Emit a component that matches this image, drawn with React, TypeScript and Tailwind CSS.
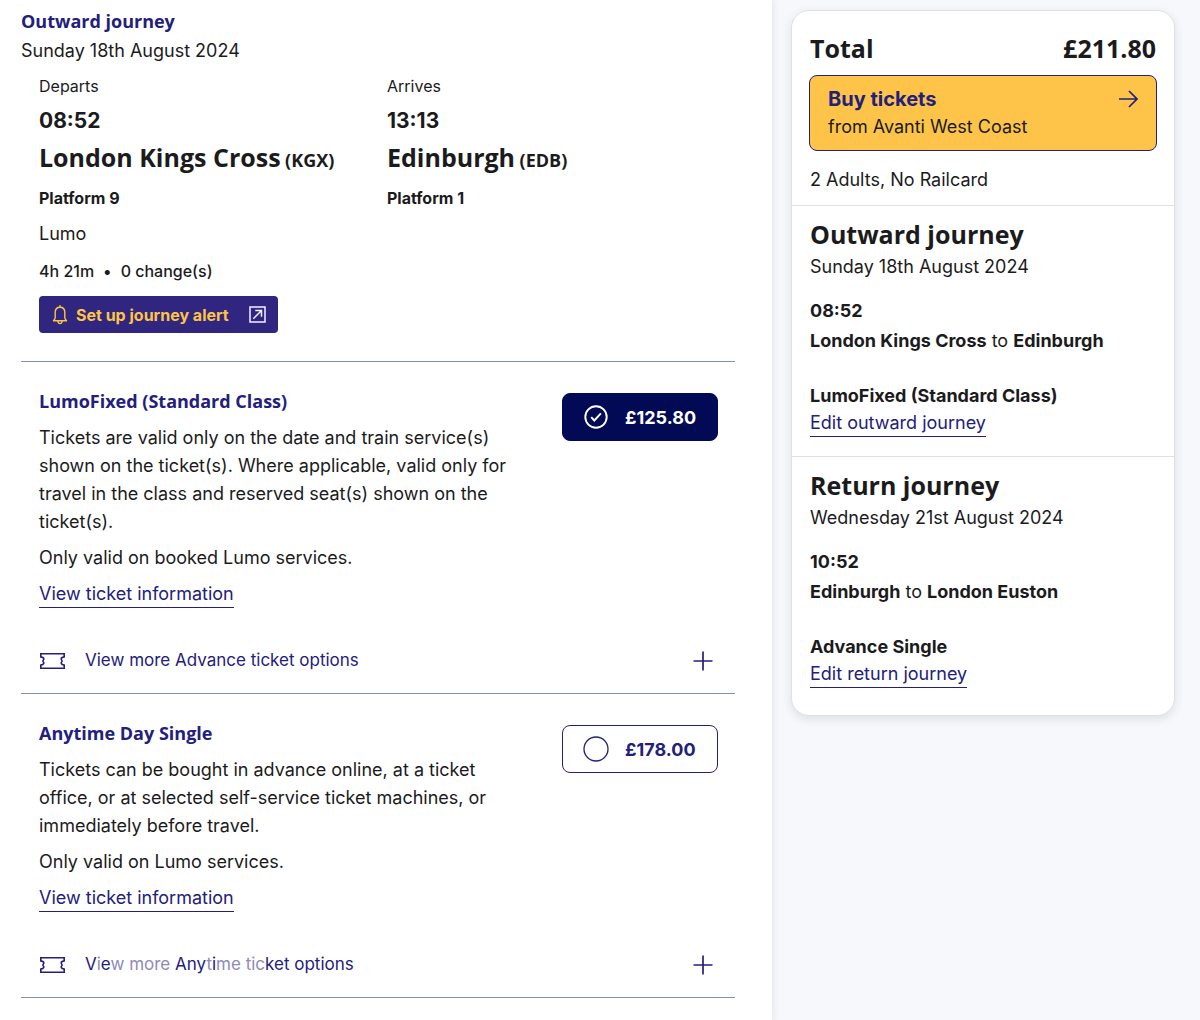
import { useState } from 'react';

const heading = "font-['Open_Sans','Noto_Sans',sans-serif] font-bold";
const link = 'inline-block border-b border-[#22207c] text-[18px] leading-[26px] text-[#22207c]';

type Stop = { label: string; time: string; station: string; code: string; platform: string };

const stops: Stop[] = [
  { label: 'Departs', time: '08:52', station: 'London Kings Cross', code: '(KGX)', platform: 'Platform 9' },
  { label: 'Arrives', time: '13:13', station: 'Edinburgh', code: '(EDB)', platform: 'Platform 1' },
];

function BellIcon() {
  return (
    <svg width="16" height="20" viewBox="0 0 16 20" fill="none" stroke="#fdc447" strokeWidth="1.4" strokeLinejoin="round" aria-hidden="true">
      <path d="M8 2.3c-3 0-4.8 2.2-4.8 5v5.2c0 1.2-.7 2.2-1.7 3.3h13c-1-1.1-1.7-2.1-1.7-3.3V7.3c0-2.8-1.8-5-4.8-5z" />
      <path d="M8 .6v1.7M6 16c.1 1.7.9 2.600 2 2.600s1.900-.9 2-2.600" strokeLinecap="round" />
    </svg>
  );
}

function ExternalIcon() {
  return (
    <svg width="17" height="17" viewBox="0 0 17 17" fill="none" stroke="#f3f1ff" strokeWidth="1.5" aria-hidden="true">
      <path d="M1 1h15v15H1zM4.300 12.700l8-8M6.300 4.500h6.200v6.200" />
    </svg>
  );
}

function TicketIcon() {
  return (
    <svg width="26" height="18" viewBox="0 0 26 18" fill="none" stroke="#22207c" strokeWidth="1.6" strokeLinejoin="miter" aria-hidden="true">
      <path d="M1.800 1.700h23.400v3.200c-1.700.3-3 1-3 2.100 0 .9.900 1.300.9 2s-.9 1.100-.9 2c0 1.100 1.300 1.800 3 2.100v3.200H1.800v-3.200c1.700-.3 3-1 3-2.100 0-.9-.9-1.300-.9-2s.9-1.100.9-2c0-1.100-1.300-1.800-3-2.100z" />
    </svg>
  );
}

function PlusIcon() {
  return (
    <svg width="20" height="20" viewBox="0 0 20 20" fill="none" stroke="#22207c" strokeWidth="1.700" aria-hidden="true">
      <path d="M10 .5v19M.5 10h19" />
    </svg>
  );
}

function RadioMark({ checked }: { checked: boolean }) {
  return (
    <svg width="26" height="26" viewBox="0 0 26 26" fill="none" stroke="currentColor" aria-hidden="true">
      {checked ? (
        <>
          <circle cx="13" cy="13" r="10.700" strokeWidth="1.900" />
          <path d="M8.200 13.100l3.100 3.400 6.600-7.100" strokeWidth="1.900" />
        </>
      ) : (
        <circle cx="13" cy="13" r="12" strokeWidth="1.300" />
      )}
    </svg>
  );
}

type FareProps = {
  id: string;
  name: string;
  price: string;
  description: string;
  note: string;
  more: React.ReactNode;
  checked: boolean;
  onSelect: () => void;
};

function Fare({ id, name, price, description, note, more, checked, onSelect }: FareProps) {
  return (
    <section className="border-b border-[#8592a6] pt-[25px]">
      <div className="flex items-start justify-between pl-[18px] pr-[17px]">
        <div className="w-[490px]">
          <h3 className={`${heading} text-[18px] leading-7 text-[#22207c]`}>{name}</h3>
          <p className="mt-[9px] leading-7">{description}</p>
          <p className="mt-2 leading-7">{note}</p>
          <p className="mt-[9px] leading-none">
            <a href="#ticket-information" className={link}>View ticket information</a>
          </p>
        </div>
        <label
          htmlFor={id}
          className={`mt-[6px] flex h-12 w-[156px] cursor-pointer items-center gap-4 rounded-lg border pl-5 text-[18px] font-bold ${
            checked ? 'border-[#020a55] bg-[#020a55] text-white' : 'border-[#22207c] bg-white text-[#22207c]'
          }`}
        >
          <input id={id} type="radio" name="fare" checked={checked} onChange={onSelect} className="sr-only" />
          <RadioMark checked={checked} />
          {price}
        </label>
      </div>
      <button type="button" className="mt-5 flex h-[65px] w-full items-center pl-[18px] pr-[22px] text-left text-[#22207c]">
        <TicketIcon />
        <span className="ml-5 flex-1 text-[17px]">{more}</span>
        <PlusIcon />
      </button>
    </section>
  );
}

type LegProps = { title: string; date: string; time: string; from: string; to: string; fare: string; edit: string };

function Leg({ title, date, time, from, to, fare, edit }: LegProps) {
  return (
    <section className="border-t border-[#dfe1e6] px-[18px] pb-[19px] pt-[10px]">
      <h2 className={`${heading} text-[25px] leading-9`}>{title}</h2>
      <p className="mt-px leading-7">{date}</p>
      <p className="mt-4 font-bold leading-7">{time}</p>
      <p className="mt-[2px] leading-7">
        <strong>{from}</strong> to <strong>{to}</strong>
      </p>
      <p className="mt-[27px] font-bold leading-7">{fare}</p>
      <p className="leading-none">
        <a href="#edit-journey" className={link}>{edit}</a>
      </p>
    </section>
  );
}

export default function App() {
  const [fare, setFare] = useState('lumo-fixed');

  return (
    <div className="flex min-h-screen items-stretch bg-[#f6f8fb] font-['Inter',sans-serif] text-[18px] text-[#1b1b1d]">
      <main className="min-w-0 flex-1 bg-white pb-5 pl-[21px] pr-[37px] shadow-[0_0_8px_rgba(40,45,70,0.12)]">
        <header className="pt-[7px]">
          <h1 className={`${heading} text-[18px] leading-7 text-[#22207c]`}>Outward journey</h1>
          <p className="mt-[2px] leading-7">Sunday 18th August 2024</p>
        </header>
        <section className="border-b border-[#8592a6] pb-7 pl-[18px] pt-[7px]">
          <div className="flex">
            {stops.map((stop) => (
              <div key={stop.code} className="w-[348px]">
                <p className="text-[16px] leading-7">{stop.label}</p>
                <p className="mt-[5px] text-[21px] font-bold leading-8">{stop.time}</p>
                <p className={`${heading} mt-[2px] whitespace-nowrap text-[25px] leading-9`}>
                  {stop.station} <span className="-ml-[2px] text-[18px]">{stop.code}</span>
                </p>
                <p className="mt-[6px] text-[16px] font-bold leading-7">{stop.platform}</p>
              </div>
            ))}
          </div>
          <p className="mt-2 leading-7">Lumo</p>
          <p className="mt-[9px] flex text-[16px] font-medium leading-7">
            <span>4h 21m</span>
            <span className="mx-[9px]">•</span>
            <span>0 change(s)</span>
          </p>
          <button type="button" className="mt-[11px] flex h-[37px] w-[239px] items-center rounded bg-[#30267f] pl-[13px] pr-3 text-[16px] font-bold text-[#fdc447]">
            <BellIcon />
            <span className="ml-2 flex-1 text-left">Set up journey alert</span>
            <ExternalIcon />
          </button>
        </section>
        <Fare
          id="lumo-fixed"
          name="LumoFixed (Standard Class)"
          price="£125.80"
          description="Tickets are valid only on the date and train service(s) shown on the ticket(s). Where applicable, valid only for travel in the class and reserved seat(s) shown on the ticket(s)."
          note="Only valid on booked Lumo services."
          more="View more Advance ticket options"
          checked={fare === 'lumo-fixed'}
          onSelect={() => setFare('lumo-fixed')}
        />
        <Fare
          id="anytime-day"
          name="Anytime Day Single"
          price="£178.00"
          description="Tickets can be bought in advance online, at a ticket office, or at selected self-service ticket machines, or immediately before travel."
          note="Only valid on Lumo services."
          more={
            <>
              V<span className="text-[#8f8abb]">i</span>e<span className="text-[#8f8abb]">w more</span> Any
              <span className="text-[#8f8abb]">t</span>i<span className="text-[#8f8abb]">me tic</span>ket options
            </>
          }
          checked={fare === 'anytime-day'}
          onSelect={() => setFare('anytime-day')}
        />
      </main>
      <aside className="w-[428px] pb-8 pl-[19px] pr-[25px] pt-[10px]">
        <div className="rounded-[18px] border border-[#dfe1e6] bg-white pb-2 shadow-[0_3px_10px_rgba(40,45,70,0.12)]">
          <section className="px-[17px] pb-[11px] pt-[19px]">
            <div className={`${heading} flex justify-between px-px text-[25px] leading-9`}>
              <h2>Total</h2>
              <p>£211.80</p>
            </div>
            <button type="button" className="mt-[9px] flex h-[76px] w-full items-start justify-between rounded-lg border border-[#22207c] bg-[#fdc449] px-[18px] pt-[9px] text-left">
              <span>
                <span className="block text-[20px] font-bold leading-7 text-[#22207c]">Buy tickets</span>
                <span className="block leading-7">from Avanti West Coast</span>
              </span>
              <svg className="mt-[5px]" width="19" height="18" viewBox="0 0 19 18" fill="none" stroke="#22207c" strokeWidth="1.700" aria-hidden="true">
                <path d="M0 9h18M10 1l8 8-8 8" />
              </svg>
            </button>
            <p className="mt-[15px] px-px leading-7">2 Adults, No Railcard</p>
          </section>
          <Leg
            title="Outward journey"
            date="Sunday 18th August 2024"
            time="08:52"
            from="London Kings Cross"
            to="Edinburgh"
            fare="LumoFixed (Standard Class)"
            edit="Edit outward journey"
          />
          <Leg
            title="Return journey"
            date="Wednesday 21st August 2024"
            time="10:52"
            from="Edinburgh"
            to="London Euston"
            fare="Advance Single"
            edit="Edit return journey"
          />
        </div>
      </aside>
    </div>
  );
}
